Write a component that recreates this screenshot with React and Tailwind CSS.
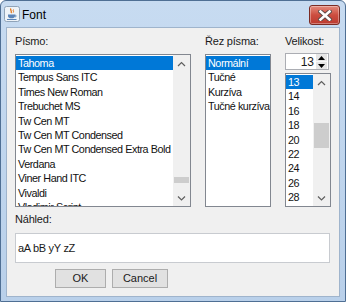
import React from "react";

const fonts = [
  "Tahoma",
  "Tempus Sans ITC",
  "Times New Roman",
  "Trebuchet MS",
  "Tw Cen MT",
  "Tw Cen MT Condensed",
  "Tw Cen MT Condensed Extra Bold",
  "Verdana",
  "Viner Hand ITC",
  "Vivaldi",
  "Vladimir Script",
];
const styles = ["Normální", "Tučné", "Kurzíva", "Tučné kurzíva"];
const sizes = ["13", "14", "16", "18", "20", "22", "24", "26", "28"];

function Chevron({ down }) {
  return (
    <svg width="9" height="6" viewBox="0 0 9 6" className="block">
      <path
        d={down ? "M1 1.5 L4.5 5 L8 1.5" : "M1 5 L4.5 1.5 L8 5"}
        fill="none"
        stroke="#5f5f5f"
        strokeWidth="1.2"
      />
    </svg>
  );
}

function ScrollBar({ thumbTop, thumbHeight }) {
  return (
    <div className="relative w-[17px] h-full bg-[#f0f0f0] flex flex-col justify-between shrink-0">
      <div className="h-[17px] flex items-center justify-center">
        <Chevron />
      </div>
      <div
        className="absolute left-[1px] right-[1px] bg-[#cdcdcd]"
        style={{ top: thumbTop, height: thumbHeight }}
      />
      <div className="h-[17px] flex items-center justify-center">
        <Chevron down />
      </div>
    </div>
  );
}

function Item({ text, selected }) {
  return (
    <div
      className={
        "h-[14.4px] leading-[14.4px] pl-[2px] whitespace-nowrap text-[10.8px] tracking-[-0.45px] " +
        (selected ? "bg-[#0078d7] text-white" : "text-[#111]")
      }
    >
      {text}
    </div>
  );
}

function JavaIcon() {
  return (
    <svg width="16" height="16" viewBox="0 0 16 16" className="block">
      <rect x="0.5" y="0.5" width="15" height="15" rx="2" fill="#eef3f8" stroke="#8fa3b8" />
      <path d="M7 2.5 C5.5 4 8.5 5 7 7" fill="none" stroke="#e2761b" strokeWidth="1.3" />
      <path d="M9.5 3.5 C8.5 4.6 10.3 5.2 9.2 6.6" fill="none" stroke="#e2761b" strokeWidth="1" />
      <path d="M4 8.5 H11 V10 C11 11.5 9.5 12.3 7.5 12.3 C5.5 12.3 4 11.5 4 10 Z" fill="#5b84b8" />
      <path d="M11 9 C12.6 9 12.6 11 11 11" fill="none" stroke="#5b84b8" strokeWidth="0.9" />
      <path d="M3 13.5 H12.5" stroke="#5b84b8" strokeWidth="1" />
    </svg>
  );
}

function CloseButton() {
  return (
    <div className="mt-[4px] w-[31px] h-[20px] rounded-[3px] border border-[#7b2b23] bg-gradient-to-b from-[#e38a7c] via-[#cc4d3f] to-[#bb3a30] flex items-center justify-center shadow-[inset_0_0_0_1px_rgba(255,255,255,0.35)]">
      <svg width="14" height="11" viewBox="0 0 14 11" className="block">
        <path d="M2.5 1.5 L11.5 9.5 M11.5 1.5 L2.5 9.5" stroke="#5a4a48" strokeWidth="4.4" strokeLinecap="square" />
        <path d="M2.5 1.5 L11.5 9.5 M11.5 1.5 L2.5 9.5" stroke="#ffffff" strokeWidth="2.6" strokeLinecap="square" />
      </svg>
    </div>
  );
}

export default function App() {
  return (
    <div className="w-[346px] h-[302px] bg-white font-['Liberation_Sans',Arial,sans-serif]">
      <div className="w-[346px] h-[302px] flex flex-col rounded-t-[6px] border border-[#4f6f94] bg-gradient-to-b from-[#c7dbf1] to-[#b9d0ea] px-[5px] pb-[4px]">
        {/* title bar */}
        <div className="h-[26px] flex items-start justify-between shrink-0">
          <div className="flex items-center h-[26px] -ml-[2px] gap-[2px]">
            <JavaIcon />
            <span className="text-[12px] text-black leading-none pt-[1px]">Font</span>
          </div>
          <CloseButton />
        </div>
        {/* content */}
        <div className="flex-1 bg-[#f0f0f0] border border-[#9fb4cc] pl-[8px] pt-[6px] text-[11px] text-[#1a1a1a]">
          <div className="flex gap-[14px] h-[173px]">
            {/* fonts column */}
            <div className="w-[176px] flex flex-col">
              <div className="h-[14px] leading-[14px] tracking-[-0.2px]">Písmo:</div>
              <div className="mt-[6px] h-[153px] border border-[#828790] bg-white flex">
                <div className="flex-1 overflow-hidden pt-[1px]">
                  {fonts.map((f, i) => (
                    <Item key={f} text={f} selected={i === 0} />
                  ))}
                </div>
                <ScrollBar thumbTop={122} thumbHeight={6} />
              </div>
            </div>
            {/* style column */}
            <div className="w-[66px] flex flex-col">
              <div className="h-[14px] leading-[14px] tracking-[-0.2px] whitespace-nowrap">Řez písma:</div>
              <div className="mt-[6px] h-[153px] border border-[#828790] bg-white overflow-hidden pt-[1px]">
                {styles.map((s, i) => (
                  <Item key={s} text={s} selected={i === 0} />
                ))}
              </div>
            </div>
            {/* size column */}
            <div className="w-[46px] flex flex-col">
              <div className="h-[14px] leading-[14px] tracking-[-0.2px] whitespace-nowrap">Velikost:</div>
              <div className="mt-[5px] w-[44px] h-[17px] border border-[#abadb3] bg-white flex items-center justify-end">
                <span className="text-[12px] leading-none pr-[2px]">13</span>
                <div className="w-[11px] h-[15px] flex flex-col mr-[1px]">
                  <div className="flex-1 bg-[#e6e6e6] border-b border-[#f8f8f8] flex items-center justify-center">
                    <svg width="7" height="4" viewBox="0 0 7 4" className="block">
                      <path d="M0 4 L3.5 0 L7 4 Z" fill="#000" />
                    </svg>
                  </div>
                  <div className="flex-1 bg-[#e6e6e6] flex items-center justify-center">
                    <svg width="7" height="4" viewBox="0 0 7 4" className="block">
                      <path d="M0 0 L3.5 4 L7 0 Z" fill="#000" />
                    </svg>
                  </div>
                </div>
              </div>
              <div className="mt-[3px] h-[134px] border border-[#828790] bg-white flex">
                <div className="flex-1 overflow-hidden pt-[1px]">
                  {sizes.map((s, i) => (
                    <Item key={s} text={s} selected={i === 0} />
                  ))}
                </div>
                <ScrollBar thumbTop={49} thumbHeight={25} />
              </div>
            </div>
          </div>
          {/* preview */}
          <div className="mt-[5px] h-[14px] leading-[14px] tracking-[-0.2px]">Náhled:</div>
          <div className="mt-[7px] w-[315px] h-[30px] border border-[#c8cbd0] bg-white flex items-center pl-[2px] tracking-[-0.3px]">
            aA bB yY zZ
          </div>
          {/* buttons */}
          <div className="mt-[6px] pl-[40px] flex gap-[6px]">
            <div className="w-[51px] h-[19px] bg-[#e1e1e1] border border-[#adadad] flex items-center justify-center">OK</div>
            <div className="w-[56px] h-[19px] bg-[#e1e1e1] border border-[#adadad] flex items-center justify-center">Cancel</div>
          </div>
        </div>
      </div>
    </div>
  );
}
